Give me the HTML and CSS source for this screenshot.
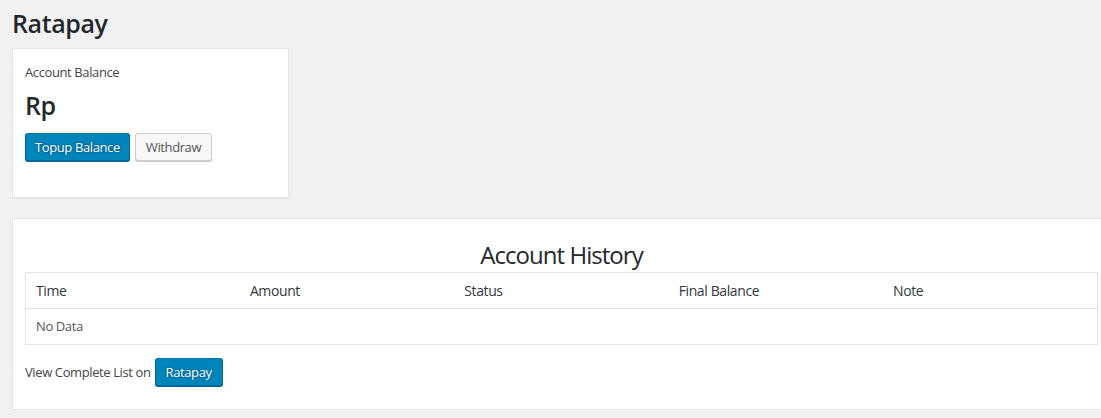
FILE: index.html
```html
<!DOCTYPE html>
<html>
<head>
<meta charset="utf-8">
<link rel="stylesheet" href="styles.css">
</head>
<body>
<div class="wrap">
  <h1 class="page-title">Ratapay</h1>
  <div class="card balance-card">
    <div class="label">Account Balance</div>
    <div class="amount">Rp</div>
    <div class="actions">
      <button class="button button-primary">Topup Balance</button>
      <button class="button">Withdraw</button>
    </div>
  </div>
  <div class="card history-card">
    <h2 class="history-title">Account History</h2>
    <table class="widefat">
      <thead>
        <tr><th>Time</th><th>Amount</th><th>Status</th><th>Final Balance</th><th>Note</th></tr>
      </thead>
      <tbody>
        <tr><td colspan="5">No Data</td></tr>
      </tbody>
    </table>
    <div class="more">View Complete List on <button class="button button-primary">Ratapay</button></div>
  </div>
</div>
</body>
</html>
```
FILE: styles.css
```css
html, body { overflow-x: hidden; }
body {
  margin: 0;
  background: #f1f1f1;
  color: #444;
  font-family: "Open Sans", "Noto Sans", sans-serif;
  font-size: 13px;
  line-height: 1.4em;
  letter-spacing: -0.03em;
}
.wrap { padding: 0 0 0 12px; }
.page-title {
  margin: 0;
  padding: 6px 0 0;
  font-size: 25px;
  font-weight: 600;
  line-height: 34px;
  color: #23282d;
}
.card {
  background: #fff;
  border: 1px solid #e5e5e5;
  box-shadow: 0 1px 1px rgba(0,0,0,.04);
  box-sizing: border-box;
}
.balance-card {
  margin-top: 8px;
  width: 277px;
  height: 150px;
  padding: 12px;
}
.label { line-height: 19px; padding-top: 2px; }
.amount {
  margin-top: 6px;
  font-size: 25px;
  font-weight: 600;
  line-height: 34px;
  color: #23282d;
}
.actions { margin-top: 11px; display: flex; gap: 5px; }
.button {
  display: inline-block;
  height: 28px;
  padding: 0 10px 1px;
  font-family: inherit;
  font-size: 13px;
  letter-spacing: -0.03em;
  line-height: 26px;
  border-radius: 3px;
  border: 1px solid #ccc;
  background: #f7f7f7;
  color: #555;
  box-shadow: 0 1px 0 #ccc;
  box-sizing: border-box;
  cursor: pointer;
}
.button-primary {
  background: #0085ba;
  border-color: #0073aa #006799 #006799;
  color: #fff;
  box-shadow: 0 1px 0 #006799;
  text-shadow: 0 -1px 1px #006799, 1px 0 1px #006799, 0 1px 1px #006799, -1px 0 1px #006799;
}
.actions .button-primary { padding: 0 9px 1px; }
.history-card {
  margin-top: 20px;
  width: 1099px;
  padding: 12px 12px 23px;
}
.history-title {
  margin: 0;
  padding-top: 8px;
  text-align: center;
  font-size: 24px;
  font-weight: 400;
  letter-spacing: -0.04em;
  line-height: 32px;
  color: #23282d;
  height: 33px;
}
.widefat {
  width: 100%;
  border-collapse: collapse;
  border: 1px solid #e5e5e5;
  table-layout: fixed;
}
.widefat th {
  text-align: left;
  font-weight: 400;
  font-size: 14px;
  color: #32373c;
  padding: 8px 10px;
  line-height: 19px;
  border-bottom: 1px solid #e1e1e1;
}
.widefat td {
  padding: 8px 10px;
  line-height: 19px;
  color: #555;
}
.more { margin-top: 13px; }
.more .button { margin-left: 1px; }
```
